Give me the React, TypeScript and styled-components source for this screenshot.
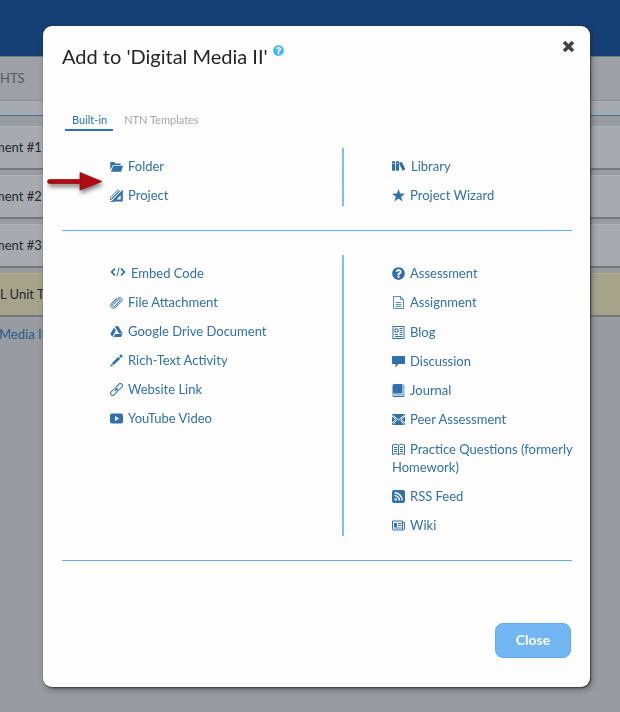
import React from "react";
import styled, { createGlobalStyle } from "styled-components";
import { FaQuestionCircle } from "react-icons/fa";
import { ImBooks, ImEmbed2 } from "react-icons/im";

const GlobalStyle = createGlobalStyle`
  * { box-sizing: border-box; }
  body {
    margin: 0;
    background: #989b9f;
    font-family: Lato, "Liberation Sans", sans-serif;
    font-size: 13px;
    overflow: hidden;
  }
`;

const Page = styled.div`
  min-height: 100vh;
  background: #989b9f;
`;
const Banner = styled.header`
  height: 57px;
  background: #154075;
  border-bottom: 1px solid #77777f;
`;
const Nav = styled.nav`
  height: 44px;
  line-height: 42px;
  background: #9da0a4;
  border-bottom: 1px solid #8c9094;
  color: #565a60;
`;
const SubBar = styled.div`
  height: 15px;
  background: #a7abb0;
  border-bottom: 1px solid #3f73a6;
  margin-bottom: 10px;
`;
const Lesson = styled.div<{ $highlight?: boolean }>`
  height: 44px;
  line-height: 41px;
  margin-bottom: 5px;
  white-space: nowrap;
  color: #25282c;
  background: ${(p) => (p.$highlight ? "#a5a48b" : "#a7abb0")};
  border-top: 1px solid ${(p) => (p.$highlight ? "#b0ae83" : "#b0b3b7")};
  border-bottom: 2px solid #74777b;
`;
const Clip = styled.span<{ $shift?: number }>`
  margin-left: ${(p) => -(p.$shift ?? 0)}px;
`;
const CourseLink = styled.a`
  display: block;
  line-height: 24px;
  color: #285d8f;
  text-decoration: none;
  white-space: nowrap;
`;

const Overlay = styled.div`
  position: fixed;
  inset: 0;
  display: flex;
  padding: 26px 30px 25px 43px;
`;
const Dialog = styled.section`
  flex: 1;
  display: flex;
  flex-direction: column;
  padding: 0 19px 29px;
  border-radius: 9px;
  background: #fdfdfd;
  box-shadow: 1px 1px 2px rgba(40, 43, 48, 0.8), 2px 3px 6px rgba(40, 43, 48, 0.4);
`;
const Top = styled.header`
  display: flex;
  justify-content: space-between;
  align-items: flex-start;
  height: 82px;
  padding-top: 13px;
`;
const Title = styled.h1`
  margin: 3px 0 0;
  font-size: 20px;
  line-height: 28px;
  font-weight: 400;
  color: #252525;
  display: flex;
  gap: 5px;
`;
const HelpButton = styled.button`
  border: 0;
  padding: 0;
  height: 11px;
  margin-top: 3px;
  background: none;
  color: #41b7fb;
  font-size: 11px;
  line-height: 0;
`;
const DismissButton = styled.button`
  border: 0;
  padding: 0;
  width: 15px;
  height: 15px;
  margin-right: -5px;
  background: none;
  color: #444;
  line-height: 0;
`;
const Tabs = styled.div`
  display: flex;
  padding-left: 3px;
  gap: 4px;
`;
const Tab = styled.button<{ $active?: boolean }>`
  border: 0;
  border-bottom: 2px solid ${(p) => (p.$active ? "#2872b8" : "transparent")};
  padding: 2px 6px 0 7px;
  height: 23px;
  line-height: 19px;
  background: none;
  font-family: inherit;
  font-size: 11px;
  color: ${(p) => (p.$active ? "#2872b8" : "#a6a6a6")};
`;
const Group = styled.div<{ $tall?: boolean }>`
  display: grid;
  grid-template-columns: 282px 1fr;
  padding: ${(p) => (p.$tall ? "24px 0" : "17px 0 24px")};
  border-bottom: 1px solid #5fadf5;
  margin-right: -1px;
`;
const Items = styled.ul<{ $divided?: boolean; $spread?: boolean }>`
  list-style: none;
  margin: 0 ${(p) => (p.$divided ? 0 : -8)}px 0 0;
  display: flex;
  flex-direction: column;
  gap: 11px;
  justify-content: ${(p) => (p.$spread ? "space-between" : "flex-start")};
  min-height: ${(p) => (p.$spread ? "281px" : "0")};
  padding: 9px 0 2px 48px;
  border-right: ${(p) => (p.$divided ? "2px solid #7dbdf5" : "0")};
`;
const Item = styled.li`
  line-height: 18px;
`;
const ItemLink = styled.a`
  color: #2f70ad;
  text-decoration: none;
  svg {
    margin-right: 5px;
    vertical-align: -2px;
  }
`;
const Bottom = styled.footer`
  display: flex;
  justify-content: flex-end;
  margin-top: auto;
`;
const CloseButton = styled.button`
  width: 76px;
  height: 35px;
  padding: 0 0 2px;
  border: 1px solid #62acf0;
  border-radius: 8px;
  background: #72b6f4;
  color: #fff;
  font-family: inherit;
  font-size: 14px;
  font-weight: 700;
`;
const ArrowMark = styled.svg`
  position: absolute;
  left: 45px;
  top: 168px;
  filter: drop-shadow(1px 3px 2px rgba(0, 0, 0, 0.5));
`;

type GlyphProps = { children: React.ReactNode };
const Glyph = ({ children }: GlyphProps) => (
  <svg width="13" height="13" viewBox="0 0 13 13" fill="none" stroke="currentColor" strokeWidth="1" aria-hidden="true">
    {children}
  </svg>
);

const icons: Record<string, React.ReactNode> = {
  folder: (
    <Glyph>
      <path d="M.3 10V2h4l1 1.500h5.400V5H3z" fill="currentColor" stroke="none" />
      <path d="M3.400 5.800H13l-1.800 6H.9z" fill="currentColor" stroke="none" />
    </Glyph>
  ),
  project: (
    <Glyph>
      <path d="M12.800.5v12H1.500zM10.700 6v4.500H6.500z" fill="currentColor" fillRule="evenodd" stroke="none" />
      <path d="M.7 8.300 7.800.8l1.800 1.600-7.200 7.500-2.100.8zM2 9.100l6.600-7M.5 12.500h4" strokeWidth=".9" />
    </Glyph>
  ),
  library: <ImBooks size={14} />,
  wizard: (
    <Glyph>
      <path d="M6.500 0 8.100 4.600 13 4.700 9.100 7.700 10.500 12.400 6.500 9.600 2.500 12.400 3.900 7.700 0 4.700 4.900 4.600z" fill="currentColor" stroke="none" />
    </Glyph>
  ),
  embed: <ImEmbed2 size={16} />,
  attachment: (
    <Glyph>
      <path d="M3.700 8.700 8.600 3.600c1-1 2.400.2 1.400 1.300l-5 5.200C3.300 11.600 1.100 9.500 2.700 7.800L8 2.300c2.500-2.300 5.500.7 3.300 3.100l-5.500 5.700C2.700 14-1.100 10.300 1.500 7.300L6.700 2" />
    </Glyph>
  ),
  drive: (
    <Glyph>
      <path d="M4.700 1.200h3.600l4.300 7.200H9L4.700 1.200zM4 2.500l1.900 3.200-3.700 6.200L.4 8.700zM5.300 9.100h7.300l-1.800 2.900H3.500z" fill="currentColor" stroke="none" />
    </Glyph>
  ),
  pencil: (
    <Glyph>
      <path d="M9.100 2 11 .3 12.900 2.200 11.100 4zM8.400 2.700l1.900 2-6.600 6.400-1.900-1.900zM1.200 9.900l2 1.900-3 .9z" fill="currentColor" stroke="none" />
    </Glyph>
  ),
  link: (
    <Glyph>
      <g transform="rotate(-45 6.500 6.500)">
        <rect x="-1" y="4.400" width="7.500" height="4.200" rx="2.100" />
        <rect x="6.500" y="4.400" width="7.500" height="4.200" rx="2.100" />
        <path d="M4 6.500h5" />
      </g>
    </Glyph>
  ),
  video: (
    <Glyph>
      <rect y="1.500" width="13" height="10" rx="2" fill="currentColor" stroke="none" />
      <path d="M5 4v5l4-2.500z" fill="#fff" stroke="none" />
    </Glyph>
  ),
  question: <FaQuestionCircle size={13} />,
  document: (
    <Glyph>
      <path d="M1.500.5h7l3 3v9h-10zM8.500.5v3h3M3.500 6.500h6M3.500 8.500h6M3.500 10.500h6" strokeWidth=".8" />
    </Glyph>
  ),
  blog: (
    <Glyph>
      <rect x="1" y=".5" width="11" height="12" />
      <path d="M3 3h3v3H3zM7.500 2.500h3M7.500 4.500h3M7.500 6.500h3M3 8.500h3M7.500 8.500h3M3 10.500h7.500" />
    </Glyph>
  ),
  discussion: (
    <Glyph>
      <path d="M.5 1h12a.5.500 0 0 1 .5.500v7a.5.500 0 0 1-.5.500H6.500l-3 3.500V9h-3a.5.500 0 0 1-.5-.5v-7A.5.500 0 0 1 .5 1z" fill="currentColor" stroke="none" />
    </Glyph>
  ),
  journal: (
    <Glyph>
      <path d="M2 0h8.500v9.500H2a1 1 0 0 0 0 2.200h9.500V.8h.8V13H2a1.500 1.500 0 0 1-1.500-1.500v-10A1.500 1.500 0 0 1 2 0z" fill="currentColor" stroke="none" />
      <path d="M2 10.600h9" strokeWidth=".6" />
    </Glyph>
  ),
  peer: (
    <Glyph>
      <path d="M0 1h13v11H0z" fill="currentColor" stroke="none" />
      <path d="M0 3 4 6.500 0 10M13 3 9 6.500l4 3.500M.5 2 6.500 7l6-5M1 11.500l3.500-4.200M12 11.500 8.500 7.300" stroke="#fdfdfd" />
    </Glyph>
  ),
  book: (
    <Glyph>
      <path d="M6.500 2.500C5 1 2.500 1 .5 2v9.500c2-1 4.500-1 6 0 1.500-1 4-1 6 0V2c-2-1-4.500-1-6 .5v9M2 4.500h3M2 6.500h3M2 8.500h3M8 4.500h3M8 6.500h3M8 8.500h3" />
    </Glyph>
  ),
  rss: (
    <Glyph>
      <rect width="13" height="13" rx="2" fill="currentColor" stroke="none" />
      <circle cx="3.700" cy="9.400" r="1.200" fill="#fff" stroke="none" />
      <path d="M2.500 5.500a5 5 0 0 1 5 5M2.500 2.800a7.700 7.700 0 0 1 7.700 7.700" stroke="#fff" strokeWidth="1.400" />
    </Glyph>
  ),
  wiki: (
    <Glyph>
      <path d="M.5 2h10v9H1.500a1 1 0 0 1-1-1zM10.500 3.500h2V10c0 1-2 1-2 0z" />
      <path d="M2 4h3v4H2z" fill="currentColor" stroke="none" />
      <path d="M6 4.500h3.500M6 6.500h3.500M2 9h7.500" />
    </Glyph>
  ),
};

type Entry = [icon: string, label: string];
type ListProps = { entries: Entry[]; divided?: boolean; spread?: boolean };
const List = ({ entries, divided, spread }: ListProps) => (
  <Items $divided={divided} $spread={spread}>
    {entries.map(([icon, label]) => (
      <Item key={label}>
        <ItemLink href="#">
          {icons[icon]}
          {label}
        </ItemLink>
      </Item>
    ))}
  </Items>
);

export default function App() {
  return (
    <>
      <GlobalStyle />
      <Page>
        <Banner />
        <Nav><Clip>HTS</Clip></Nav>
        <SubBar />
        <Lesson><Clip $shift={6}>ment #1</Clip></Lesson>
        <Lesson><Clip $shift={6}>ment #2</Clip></Lesson>
        <Lesson><Clip $shift={6}>ment #3</Clip></Lesson>
        <Lesson $highlight><Clip>L Unit T</Clip></Lesson>
        <CourseLink href="#"><Clip $shift={1}>Media II</Clip></CourseLink>
      </Page>
      <Overlay>
        <Dialog role="dialog" aria-labelledby="dialog-title">
          <Top>
            <Title id="dialog-title">
              Add to 'Digital Media II'
              <HelpButton aria-label="Help"><FaQuestionCircle /></HelpButton>
            </Title>
            <DismissButton aria-label="Dismiss">
              <svg width="15" height="15" viewBox="0 0 15 15" stroke="currentColor" strokeWidth="3.600">
                <path d="M3 3l9 9M12 3l-9 9" />
              </svg>
            </DismissButton>
          </Top>
          <Tabs role="tablist">
            <Tab role="tab" aria-selected="true" $active>Built-in</Tab>
            <Tab role="tab" aria-selected="false">NTN Templates</Tab>
          </Tabs>
          <Group>
            <List divided entries={[["folder", "Folder"], ["project", "Project"]]} />
            <List entries={[["library", "Library"], ["wizard", "Project Wizard"]]} />
          </Group>
          <Group $tall>
            <List
              divided
              entries={[
                ["embed", "Embed Code"],
                ["attachment", "File Attachment"],
                ["drive", "Google Drive Document"],
                ["pencil", "Rich-Text Activity"],
                ["link", "Website Link"],
                ["video", "YouTube Video"],
              ]}
            />
            <List
              spread
              entries={[
                ["question", "Assessment"],
                ["document", "Assignment"],
                ["blog", "Blog"],
                ["discussion", "Discussion"],
                ["journal", "Journal"],
                ["peer", "Peer Assessment"],
                ["book", "Practice Questions (formerly Homework)"],
                ["rss", "RSS Feed"],
                ["wiki", "Wiki"],
              ]}
            />
          </Group>
          <Bottom>
            <CloseButton>Close</CloseButton>
          </Bottom>
        </Dialog>
      </Overlay>
      <ArrowMark width="60" height="28" viewBox="0 0 60 28" aria-hidden="true">
        <path d="M4.500 11.500H35V4.500L57 13.500 35 22V15.500H4.500a2 2 0 0 1 0-4z" fill="#b00b10" stroke="#8f0a0d" strokeWidth=".7" />
      </ArrowMark>
    </>
  );
}
